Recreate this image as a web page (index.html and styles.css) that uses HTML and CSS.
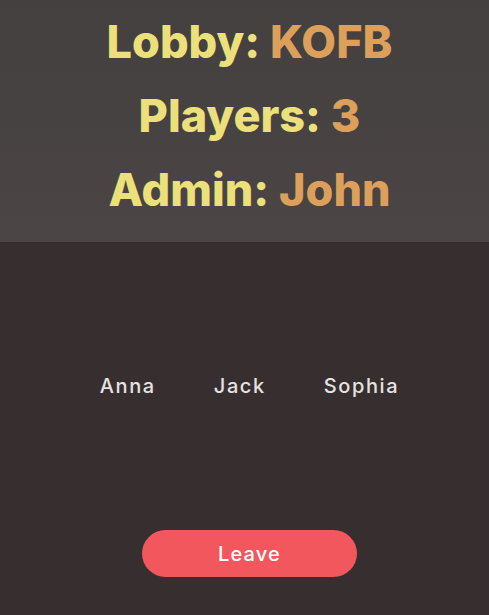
FILE: index.html
```html
<!DOCTYPE html>
<html lang="en">
<head>
<meta charset="utf-8">
<link rel="stylesheet" href="styles.css">
</head>
<body>
<header class="info">
  <h2 class="line">Lobby: <span class="val">KOFB</span></h2>
  <h2 class="line">Players: <span class="val">3</span></h2>
  <h2 class="line">Admin: <span class="val">John</span></h2>
</header>
<main class="lobby">
  <ul class="players">
    <li>Anna</li>
    <li>Jack</li>
    <li>Sophia</li>
  </ul>
  <button class="leave">Leave</button>
</main>
</body>
</html>
```
FILE: styles.css
```css
html, body {
  margin: 0;
  padding: 0;
  height: 100%;
}
body {
  background: #372f2f;
  font-family: Inter, "Open Sans", sans-serif;
  display: flex;
  flex-direction: column;
}
.info {
  height: 242px;
  box-sizing: border-box;
  background: linear-gradient(180deg, #444040 0%, #4b4545 100%);
  display: flex;
  flex-direction: column;
  align-items: center;
  padding: 12px 0 0 10px;
  gap: 14px;
}
.line {
  margin: 0;
  font-size: 45px;
  line-height: 60px;
  font-weight: 800;
  color: #ece07a;
}
.val {
  color: #dca05a;
}
.lobby {
  flex: 1;
  display: flex;
  flex-direction: column;
  align-items: center;
  padding-left: 10px;
}
.players {
  list-style: none;
  margin: 131px 0 0;
  padding: 0;
  display: flex;
  gap: 58px;
}
.players li {
  color: #e6e2e2;
  font-size: 20px;
  line-height: 26px;
  font-weight: 500;
  letter-spacing: 1.6px;
}
.leave {
  margin-top: 131px;
  width: 215px;
  height: 47px;
  border: none;
  border-radius: 24px;
  background: #f2575d;
  color: #fff;
  font-family: Inter, "Open Sans", sans-serif;
  font-size: 20px;
  font-weight: 500;
  letter-spacing: 1.2px;
}
```
